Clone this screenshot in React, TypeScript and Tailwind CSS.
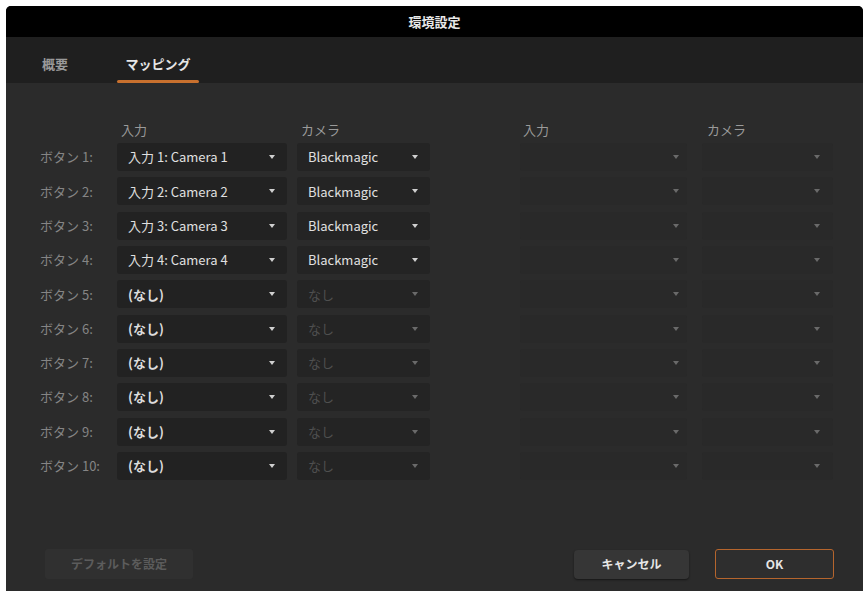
import React from "react";

interface MappingRow {
  label: string;
  input: string;
  camera: string;
}

const rows: MappingRow[] = [
  { label: "ボタン 1:", input: "入力 1: Camera 1", camera: "Blackmagic" },
  { label: "ボタン 2:", input: "入力 2: Camera 2", camera: "Blackmagic" },
  { label: "ボタン 3:", input: "入力 3: Camera 3", camera: "Blackmagic" },
  { label: "ボタン 4:", input: "入力 4: Camera 4", camera: "Blackmagic" },
  { label: "ボタン 5:", input: "(なし)", camera: "" },
  { label: "ボタン 6:", input: "(なし)", camera: "" },
  { label: "ボタン 7:", input: "(なし)", camera: "" },
  { label: "ボタン 8:", input: "(なし)", camera: "" },
  { label: "ボタン 9:", input: "(なし)", camera: "" },
  { label: "ボタン 10:", input: "(なし)", camera: "" },
];

const Arrow: React.FC<{ dim?: boolean }> = ({ dim }) => (
  <svg width="6" height="4" viewBox="0 0 6 4" className="shrink-0">
    <path d="M0 0 L6 0 L3 4 Z" fill={dim ? "#6a6a6a" : "#d0d0d0"} />
  </svg>
);

const App: React.FC = () => {
  return (
    <div
      className="w-[868px] h-[595px] bg-white pt-[6px] pl-[6px]"
      style={{ fontFamily: '"Noto Sans CJK JP", "Noto Sans", sans-serif' }}
    >
      <div className="w-[857px] h-[585px] flex flex-col rounded-t-[5px] overflow-hidden bg-[#2b2b2b]">
        {/* title bar */}
        <div className="h-[31px] bg-black flex items-center justify-center text-[13px] font-bold text-[#e8e8e8]">
          環境設定
        </div>

        {/* tabs */}
        <div className="h-[46px] bg-[#1f1f1f] flex items-end pl-[36px] gap-[49px] text-[13px]">
          <div className="pb-[10px] text-[#9a9a9a] font-bold">概要</div>
          <div className="flex flex-col items-center">
            <div className="px-[3px] pb-[7px] text-[#e6e6e6] font-bold">マッピング</div>
            <div className="h-[3px] w-[82px] bg-[#c8702e] rounded-full" />
          </div>
        </div>

        {/* mapping grid */}
        <div className="pt-[36px] pl-[34px] flex flex-col text-[13px]">
          <div className="h-[21px] flex items-center text-[#9a9a9a]">
            <div className="w-[81px]" />
            <div className="w-[180px]">入力</div>
            <div className="w-[222px]">カメラ</div>
            <div className="w-[184px]">入力</div>
            <div>カメラ</div>
          </div>
          {rows.map((row, rowIndex) => (
            <div key={rowIndex} className="h-[34.3px] flex items-center">
              <div className="w-[77px] text-[#858585] whitespace-nowrap">{row.label}</div>
              <div className="w-[170px] h-[28px] bg-[#222222] rounded-[3px] flex items-center justify-between pl-[11px] pr-[12px]">
                <span className={row.camera ? "text-[#e0e0e0]" : "text-[#dcdcdc] font-bold"}>
                  {row.input}
                </span>
                <Arrow />
              </div>
              <div className="ml-[10px] w-[133px] h-[28px] rounded-[3px] flex items-center justify-between pl-[11px] pr-[12px] bg-[#242424]">
                <span className={row.camera ? "text-[#e0e0e0]" : "text-[#4f4f4f]"}>
                  {row.camera || "なし"}
                </span>
                <Arrow dim={!row.camera} />
              </div>
              <div className="ml-[90px] w-[167px] h-[28px] rounded-[3px] bg-[#292929] flex items-center justify-end pr-[8px]">
                <Arrow dim />
              </div>
              <div className="ml-[15px] w-[131px] h-[28px] rounded-[3px] bg-[#292929] flex items-center justify-end pr-[13px]">
                <Arrow dim />
              </div>
            </div>
          ))}
        </div>

        {/* footer buttons */}
        <div className="mt-auto pb-[12px] pl-[39px] pr-[29px] flex items-center text-[12px] font-bold">
          <div className="w-[148px] h-[30px] bg-[#303030] rounded-[3px] flex items-center justify-center text-[#5c5c5c]">
            デフォルトを設定
          </div>
          <div className="ml-auto w-[115px] h-[29px] bg-[#363636] rounded-[4px] flex items-center justify-center text-[#e6e6e6] shadow-[0_1px_2px_rgba(0,0,0,0.5)]">
            キャンセル
          </div>
          <div className="ml-[26px] w-[119px] h-[30px] bg-[#2e2e2e] border border-[#b5652d] rounded-[3px] flex items-center justify-center text-[#e6e6e6]">
            OK
          </div>
        </div>
      </div>
    </div>
  );
};

export default App;
